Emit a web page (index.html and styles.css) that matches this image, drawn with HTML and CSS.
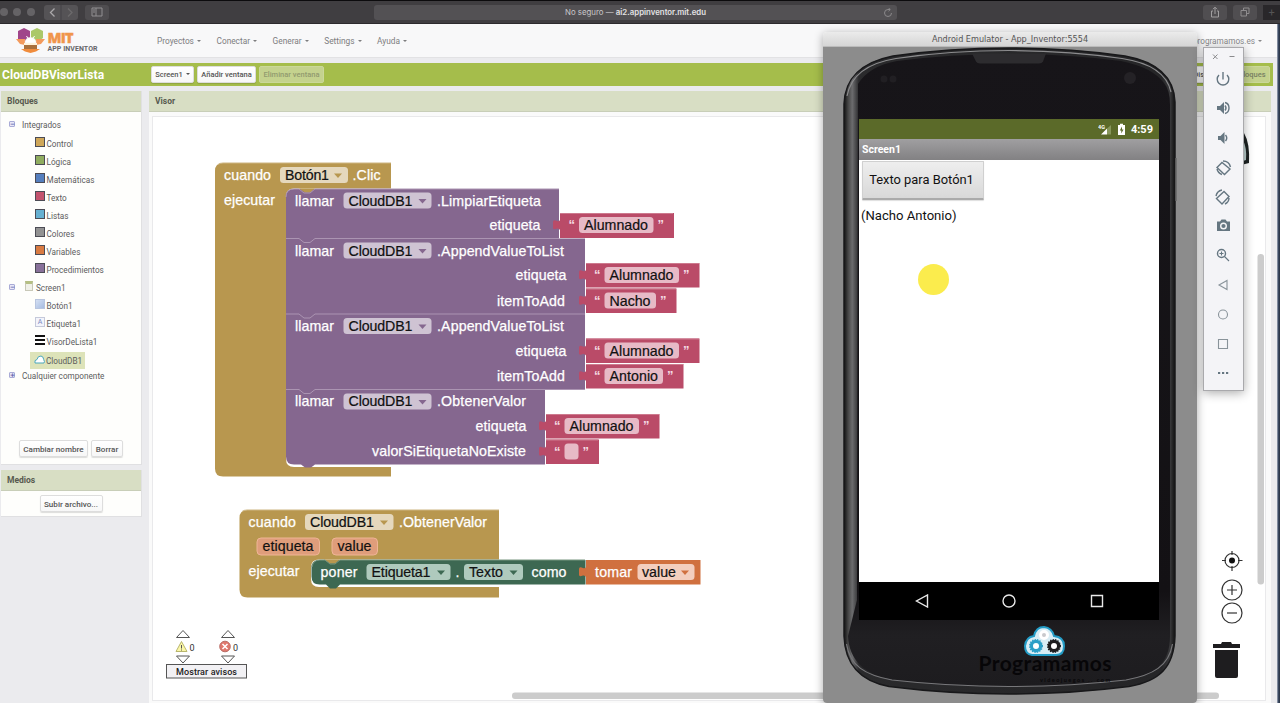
FILE: index.html
```html
<!DOCTYPE html>
<html lang="es">
<head>
<meta charset="utf-8">
<title>MIT App Inventor</title>
<link rel="stylesheet" href="styles.css">
</head>
<body>
<div class="browser">
  <div class="lights"><i></i><i></i><i></i></div>
  <div class="navbtns">
    <svg width="34" height="15" viewBox="0 0 34 15"><path d="M10.500 3.500 6.500 7.500l4 4" fill="none" stroke="#aaa8aa" stroke-width="1.300"/><path d="M24 3.500l4 4-4 4" fill="none" stroke="#6c6a6c" stroke-width="1.300"/><path d="M17 0v15" stroke="#454346"/></svg>
  </div>
  <div class="sidebtn"><svg width="12" height="10" viewBox="0 0 12 10"><path d="M1 1h10v8H1zM5 1v8M2 3h2M2 5h2" fill="none" stroke="#929092"/></svg></div>
  <div class="address"><span>No seguro — <b>ai2.appinventor.mit.edu</b></span>
    <svg class="reload" width="10" height="10" viewBox="0 0 10 10"><path d="M8.500 5A3.500 3.500 0 1 1 5 1.500h2M5.500 0 7.300 1.500 5.500 3.200" fill="none" stroke="#8b898b"/></svg></div>
  <div class="winbtns">
    <span><svg width="10" height="12" viewBox="0 0 10 12"><path d="M3 5H1.500v6h7V5H7M5 8V1.500M3 3.200l2-2 2 2" fill="none" stroke="#a09ea0"/></svg></span>
    <span><svg width="10" height="10" viewBox="0 0 10 10"><path d="M1 3.500h5.500V9H1zM3.500 3.500V1H9v5.500H6.500" fill="none" stroke="#8f8d8f"/></svg></span>
    <span class="plus">+</span>
  </div>
</div>

<header class="top">
  <svg class="logo" width="86" height="30" viewBox="14 25 86 30">
    <path d="M18 30l6-3 6 3v7l-6 4-6-3z" fill="#a0458a"/>
    <path d="M31 30l6-3 6 3v7l-6 4-6-3z" fill="#abc868"/>
    <path d="M16 38h9v6l-5-1zM45 38h-9v6l5-1z" fill="#f39a5c"/>
    <path d="M21 48h19l-4 2.500-5.500 1.500-5.500-1.500z" fill="#f08c3c"/>
    <path d="M25 42q0-5.500 5.500-5.500t5.500 5.500z" fill="#fff" stroke="#eee" stroke-width=".5"/>
    <path d="M26.500 35l1.500 2.500M34.500 35 33 37.500" stroke="#fff"/>
    <path d="M24 42h13v6H24z" fill="#a9703c"/><path d="M24 42h13v2H24z" fill="#fff3dc"/>
    <text x="47.500" y="41.500" class="mit" textLength="26">MIT</text>
    <text x="47.500" y="50" class="appinv" textLength="50">APP INVENTOR</text>
  </svg>
  <nav class="menu"><a>Proyectos</a><a>Conectar</a><a>Generar</a><a>Settings</a><a>Ayuda</a></nav>
  <a class="account">programamos.es</a>
</header>

<div class="project">
  <h1>CloudDBVisorLista</h1>
  <button class="caret">Screen1</button><button>Añadir ventana</button><button class="off">Eliminar ventana</button>
  <div class="modes"><button>Diseñador</button><button class="off">Bloques</button></div>
</div>

<main class="cols">
  <aside class="side">
    <section class="panel bloques">
      <h2>Bloques</h2>
      <div class="tree">
        <div class="node root"><i class="tog">−</i>Integrados</div>
        <div class="node"><i class="sq control"></i>Control</div>
        <div class="node"><i class="sq logica"></i>Lógica</div>
        <div class="node"><i class="sq mates"></i>Matemáticas</div>
        <div class="node"><i class="sq texto"></i>Texto</div>
        <div class="node"><i class="sq listas"></i>Listas</div>
        <div class="node"><i class="sq colores"></i>Colores</div>
        <div class="node"><i class="sq vars"></i>Variables</div>
        <div class="node"><i class="sq procs"></i>Procedimientos</div>
        <div class="node scr"><i class="tog">−</i><i class="sheet"></i>Screen1</div>
        <div class="node"><i class="sq btn"></i>Botón1</div>
        <div class="node"><i class="sq lbl">A</i>Etiqueta1</div>
        <div class="node"><i class="sq lst"></i>VisorDeLista1</div>
        <div class="node sel"><span><svg width="11" height="9" viewBox="0 0 11 9"><path d="M1 8Q0 5 3 4.500 3.500 1 7 1q2.500.5 2.700 3.500Q11 7 10 8z" fill="#fff" stroke="#4ba7bd"/></svg>CloudDB1</span></div>
        <div class="node root last"><i class="tog">+</i>Cualquier componente</div>
      </div>
      <div class="actions"><button>Cambiar nombre</button><button>Borrar</button></div>
    </section>
    <section class="panel medios">
      <h2>Medios</h2>
      <div class="actions"><button>Subir archivo...</button></div>
    </section>
  </aside>

  <section class="panel visor">
    <h2>Visor</h2>
    <svg class="workspace" width="1122" height="591" viewBox="149 112 1122 591">
      <defs>
        <path id="dn" d="M0 0h8L4 4.500z"/>
        <path id="tab" d="M1 7H0Q-1 9-3 8-7 6-7 9V15Q-7 17-3 15.500-1 15 0 17H1z"/>
      </defs>
      <rect x="152.500" y="116.500" width="1113" height="584" fill="#fff" stroke="#e9e9eb"/>

      <!-- cuando Botón1.Clic -->
      <path d="M391 163H223q-8 0-8 8V468.500q0 8 8 8H391z" class="gold"/>
      <path d="M392 188.500H294q-8 0-8 8V459q0 8 8 8h98z" fill="#fff"/>
      <path d="M218 164.500q2-1.500 5-1.500H391" class="hi"/>
      <path d="M286 197q0-8 8-8H559V238.500H585V389.500H545V464.500H315l-4 3h-6l-4-3H294q-8 0-8-8z" class="purple"/>
      <path d="M299 188.500h16l-5 4h-5z" class="gold"/>
      <path d="M286 238.500h13l5 4h6l5-4H559M286 314h13l5 4h6l5-4H585M286 389.500h13l5 4h6l5-4H585M286 197q0-8 8-8h5l5 4h6l5-4H559" class="seam"/>
      <g class="t">
        <text x="224" y="180" textLength="47">cuando</text><text x="352.500" y="180" textLength="28">.Clic</text>
        <text x="224" y="204.500" textLength="51">ejecutar</text>
      </g>
      <rect x="280" y="167" width="68" height="16" rx="3.500" class="pg"/><text x="285" y="180" class="k" textLength="44">Botón1</text><use href="#dn" x="334" y="173.500" fill="#b8974f"/>
      <g class="t">
        <text x="295" y="205.500" textLength="39">llamar</text><text x="437" y="205.500" textLength="104">.LimpiarEtiqueta</text><text x="489.500" y="230" textLength="51">etiqueta</text>
        <text x="295" y="255.500" textLength="39">llamar</text><text x="437" y="255.500" textLength="127">.AppendValueToList</text><text x="515.500" y="280" textLength="51">etiqueta</text><text x="497" y="305.500" textLength="68">itemToAdd</text>
        <text x="295" y="331" textLength="39">llamar</text><text x="437" y="331" textLength="127">.AppendValueToList</text><text x="515.500" y="355.500" textLength="51">etiqueta</text><text x="497" y="381" textLength="68">itemToAdd</text>
        <text x="295" y="406" textLength="39">llamar</text><text x="437" y="406" textLength="89">.ObtenerValor</text><text x="475.500" y="431" textLength="51">etiqueta</text><text x="372" y="456" textLength="154">valorSiEtiquetaNoExiste</text>
      </g>
      <g class="pp"><rect x="343.500" y="192.500" width="88" height="16" rx="3.500"/><rect x="343.500" y="242.500" width="88" height="16" rx="3.500"/><rect x="343.500" y="318" width="88" height="16" rx="3.500"/><rect x="343.500" y="393.500" width="88" height="16" rx="3.500"/></g>
      <g class="k"><text x="348.500" y="205.500" textLength="64">CloudDB1</text><text x="348.500" y="255.500" textLength="64">CloudDB1</text><text x="348.500" y="331" textLength="64">CloudDB1</text><text x="348.500" y="406" textLength="64">CloudDB1</text></g>
      <g fill="#85678f"><use href="#dn" x="418.500" y="199"/><use href="#dn" x="418.500" y="249"/><use href="#dn" x="418.500" y="324.500"/><use href="#dn" x="418.500" y="400"/></g>

      <g class="red">
        <rect x="560" y="213" width="114" height="25"/><use href="#tab" x="560" y="213"/>
        <rect x="586" y="263" width="113.500" height="24.500"/><use href="#tab" x="586" y="263"/>
        <rect x="586" y="288.500" width="90.500" height="24.500"/><use href="#tab" x="586" y="288.500"/>
        <rect x="586" y="338.500" width="113.500" height="24.500"/><use href="#tab" x="586" y="338.500"/>
        <rect x="586" y="364" width="97.500" height="24.500"/><use href="#tab" x="586" y="364"/>
        <rect x="546" y="414" width="113.500" height="24.500"/><use href="#tab" x="546" y="414"/>
        <rect x="546" y="439.500" width="53" height="24.500"/><use href="#tab" x="546" y="439.500"/>
      </g>
      <path d="M560 213.500h113M586 263.500h113M586 289h90M586 339h113M586 364.500h97M546 414.500h113M546 440h52" class="redhi"/>
      <g class="pr"><rect x="579" y="217" width="74.500" height="16" rx="3.500"/><rect x="604.500" y="267" width="74.500" height="16" rx="3.500"/><rect x="604.500" y="292.500" width="51.500" height="16" rx="3.500"/><rect x="604.500" y="342.500" width="74.500" height="16" rx="3.500"/><rect x="604.500" y="368" width="58.500" height="16" rx="3.500"/><rect x="564.500" y="418" width="74.500" height="16" rx="3.500"/><rect x="564.500" y="443.500" width="14" height="16" rx="3.500"/></g>
      <g class="k"><text x="584" y="230" textLength="64">Alumnado</text><text x="609.500" y="280" textLength="64">Alumnado</text><text x="609.500" y="305.500" textLength="41">Nacho</text><text x="609.500" y="355.500" textLength="64">Alumnado</text><text x="609.500" y="381" textLength="48.500">Antonio</text><text x="569.500" y="431" textLength="64">Alumnado</text></g>
      <g class="q"><text x="568.500" y="229">“</text><text x="657.500" y="229">”</text><text x="594" y="279">“</text><text x="683" y="279">”</text><text x="594" y="304.500">“</text><text x="660" y="304.500">”</text><text x="594" y="354.500">“</text><text x="683" y="354.500">”</text><text x="594" y="380">“</text><text x="667" y="380">”</text><text x="554" y="430">“</text><text x="643" y="430">”</text><text x="554" y="455.500">“</text><text x="582.500" y="455.500">”</text></g>

      <!-- cuando CloudDB1.ObtenerValor -->
      <path d="M499 510H247.500q-8 0-8 8V589.500q0 8 8 8H499z" class="gold"/>
      <path d="M499.500 559.500H319q-8 0-8 8V579q0 8 8 8H499.500z" fill="#fff"/>
      <path d="M242 511.500q2-1.500 5-1.500H499" class="hi"/>
      <path d="M311.500 568q0-8 8-8H585.500V584.500H340l-4 4h-6l-4-4H319.500q-8 0-8-8z" class="green"/>
      <path d="M324 559.500h16l-5 4h-5z" class="gold"/>
      <path d="M312 567q1-7 8-7h5l5 4h5l5-4H585" fill="none" stroke="#76957f"/>
      <g class="orange"><rect x="586" y="560" width="114.500" height="24.500"/><use href="#tab" x="586" y="560"/></g>
      <g class="t"><text x="248.500" y="527" textLength="47.500">cuando</text><text x="399" y="527" textLength="88">.ObtenerValor</text><text x="248.500" y="576" textLength="51">ejecutar</text><text x="320.500" y="577" textLength="37">poner</text><text x="455.500" y="577">.</text><text x="531.500" y="577" textLength="35">como</text><text x="595" y="577" textLength="37">tomar</text></g>
      <rect x="305" y="514" width="88.500" height="16" rx="3.500" class="pg"/><use href="#dn" x="380" y="520.500" fill="#b8974f"/>
      <g fill="#df9d7b" stroke="#efb596"><rect x="257" y="538" width="62.500" height="17" rx="4"/><rect x="332" y="538" width="45.500" height="17" rx="4"/></g>
      <g fill="#afcabd"><rect x="366.500" y="564" width="84" height="16" rx="3.500"/><rect x="464" y="564" width="59" height="16" rx="3.500"/></g>
      <rect x="637.500" y="564" width="57" height="16" rx="3.500" fill="#f3cebe"/>
      <use href="#dn" x="437" y="570.500" fill="#3d6852"/><use href="#dn" x="509.500" y="570.500" fill="#3d6852"/><use href="#dn" x="681" y="570.500" fill="#d0703f"/>
      <g class="k"><text x="310" y="527" textLength="64">CloudDB1</text><text x="262.500" y="551" textLength="51">etiqueta</text><text x="337.500" y="551" textLength="34">value</text><text x="371.500" y="577" textLength="59">Etiqueta1</text><text x="469" y="577" textLength="34">Texto</text><text x="642" y="577" textLength="34">value</text></g>

      <!-- warning indicator -->
      <g fill="#fff" stroke="#555"><path d="M176.500 637.500h13l-6.500-7zM221.500 637.500h13l-6.500-7zM176.500 656h13l-6.500 7zM221.500 656h13l-6.500 7z"/></g>
      <path d="M176 651.500l5.500-10 5.500 10z" fill="#fbf7a8" stroke="#b9b66d"/><path d="M181.500 645v3.500M181.500 649.500v1" stroke="#555"/>
      <circle cx="225" cy="646.500" r="5.300" fill="#e0786d" stroke="#b96d65"/><path d="M222.500 644l5 5m0-5-5 5" stroke="#fff" stroke-width="1.500"/>
      <g class="cnt"><text x="189.500" y="650.500">0</text><text x="233" y="650.500">0</text></g>
      <rect x="166.500" y="664.500" width="80" height="13.500" fill="#f2f1f4" stroke="#555"/>
      <text x="176" y="674.500" class="avisos" textLength="61">Mostrar avisos</text>

      <!-- backpack edge -->
      <path d="M1230 133h14q6 10 5 30l-8 2z" fill="#1d2222"/><path d="M1243 140q4 8 3 20l-3 1z" fill="#b9cdcc"/>

      <!-- zoom controls, trash, scrollbars -->
      <g fill="none" stroke="#333" stroke-width="1.200"><circle cx="1232" cy="560.500" r="7"/><path d="M1232 551v4M1232 566v5M1222 560.500h4M1238 560.500h4.500"/><circle cx="1232" cy="590" r="10"/><path d="M1227 590h10M1232 585v10"/><circle cx="1232" cy="613" r="10"/><path d="M1227 613h10"/></g>
      <circle cx="1232" cy="560.500" r="3" fill="#111"/>
      <path d="M1213 644h8l1-2h9l1 2h8v4h-27zM1215 650h23v26q0 2-2 2h-19q-2 0-2-2z" fill="#1e1d1f"/>
      <rect x="1257.500" y="254" width="6.500" height="330.500" rx="3" fill="#ccc"/>
      <rect x="512" y="692.500" width="707" height="6.500" rx="3" fill="#ccc"/>
    </svg>
  </section>
</main>
<div class="edge"></div>

<div class="emulator">
  <div class="emu-title">Android Emulator - App_Inventor:5554</div>
  <div class="emu-body">
    <svg class="phone" width="374" height="656" viewBox="823 47 374 656">
      <defs>
        <linearGradient id="rim" x1="0" x2="1"><stop offset="0" stop-color="#111"/><stop offset=".012" stop-color="#444"/><stop offset=".025" stop-color="#6c6c6e"/><stop offset=".045" stop-color="#2a2a2c"/><stop offset=".96" stop-color="#252527"/><stop offset=".985" stop-color="#39393b"/><stop offset="1" stop-color="#111"/></linearGradient>
        <linearGradient id="face" x1="0" y1="0" x2="0" y2="1"><stop offset="0" stop-color="#171519"/><stop offset=".85" stop-color="#131114"/><stop offset=".92" stop-color="#201f22"/><stop offset="1" stop-color="#1d1c1f"/></linearGradient>
      </defs>
      <path d="M844 104C845 76 863 62 893 56Q950 48 1009 48T1125 56C1158 62 1174 77 1175 102V636C1174 668 1159 681 1129 686.500Q1070 694 1009 694T889 686.500C860 681 845 665 844 636z" fill="url(#rim)" stroke="#18181a" stroke-width="1.500"/>
      <path d="M858 84Q869 66 897 61 950 54 1009 54T1121 61Q1152 67 1164 83 1170 90 1170 105V636C1170 664 1154 675 1127 679.500Q1070 686 1009 686T891 679.500C865 675 849 660 848 636L857 600z" fill="url(#face)"/>
      <path d="M847 96C851 75 868 63 896 58.500Q950 50.500 1009 50.500T1122 58.500C1152 63 1167 74 1171 92" fill="none" stroke="#8c8c8e" stroke-width="1.200"/>
      <path d="M846.500 644C850 666 865 675 892 680Q950 686.500 1009 686.500T1126 680C1153 675 1169 666 1172.500 644" fill="none" stroke="#77777a" stroke-width="1.200"/>
      <path d="M972 53.500h74l-3 8q-1 2-4 2h-59q-3 0-4-2z" fill="#2d2c2f"/>
      <circle cx="884" cy="79" r="3.500" fill="#211f23"/><circle cx="893" cy="79" r="3.500" fill="#211f23"/><circle cx="1130" cy="78" r="6" fill="#242226"/>
      <path d="M1176 158v43" stroke="#666" stroke-width="1.500"/>
      <path d="M1032 655q-7-1-7-9 1-9 9-10 2-9 10-9 8 1 10 9 10 1 10 10t-8 9z" fill="#d8edf5" stroke="#239cc6" stroke-width="2"/>
      <circle cx="1044" cy="635" r="3.500" fill="#c9c9cc" stroke="#fff" stroke-width="3"/>
      <circle cx="1036" cy="646" r="4.600" fill="#fff" stroke="#2b9fc7" stroke-width="3.200"/><circle cx="1036" cy="646" r="6.300" fill="none" stroke="#2b9fc7" stroke-width="1.400" stroke-dasharray="1.300 1.200"/>
      <circle cx="1054" cy="646" r="4.600" fill="#fff" stroke="#1c1b1d" stroke-width="3.200"/><circle cx="1054" cy="646" r="6.300" fill="none" stroke="#1c1b1d" stroke-width="1.400" stroke-dasharray="1.300 1.200"/>
      <text x="978.500" y="671" class="brand" textLength="133">Programamos</text>
      <text x="1040" y="682" class="brand2" textLength="70">videojuegos .. com</text>
    </svg>
    <div class="screen">
      <div class="status">
        <svg width="28" height="13" viewBox="0 0 28 13"><text x="0" y="5.500" class="g4">4G</text><path d="M3 11.500 9 5.500v6z" fill="#fff"/><path d="M9 5.500 13 2v9.500H9z" fill="#87965b"/><path d="M20 2h2V.7h3V2h2v10h-7z" fill="#fff"/><path d="M24 3.500 21.800 7.500h1.500V10.500l2.200-4H24z" fill="#5b6a29"/></svg>
        <b>4:59</b>
      </div>
      <div class="apptitle">Screen1</div>
      <div class="app"><button>Texto para Botón1</button><p>(Nacho Antonio)</p><i class="pointer"></i></div>
      <div class="softkeys">
        <svg width="14" height="14" viewBox="0 0 14 14"><path d="M12.500 1v12L1.500 7z"/></svg>
        <svg width="14" height="14" viewBox="0 0 14 14"><circle cx="7" cy="7" r="6"/></svg>
        <svg width="14" height="14" viewBox="0 0 14 14"><path d="M1.500 1.500h11v11h-11z"/></svg>
      </div>
    </div>
  </div>
</div>

<div class="tools">
  <svg width="40" height="343" viewBox="1203 47 40 343" fill="none" stroke="#657681" stroke-width="1.400">
    <path d="M1213 54.500l4.500 4.500m0-4.500-4.500 4.500M1229.500 56.500h5" stroke="#8a8a8d" stroke-width="1"/>
    <path d="M1219 75a5.800 5.800 0 1 0 8 0M1223 72v7.500"/>
    <path d="M1217 106v4h3l4 4v-12l-4 4z" fill="#657681" stroke="none"/><path d="M1225 105.500q2 2.500 0 5M1225 102.500q4 1 4 5.500t-4 5.500"/>
    <path d="M1218 136v4h2.500l4 4v-12l-4 4z" fill="#657681" stroke="none"/><path d="M1225.500 135q2.500 3 0 6"/>
    <path d="M1217 167.500l5-5 8 6.500-5.500 5.500zM1223 161q6 0 7.500 6M1217 169q1 4 5 5.500"/>
    <path d="M1229 196.500l-5-5-7.500 7 5.500 5.500zM1222 190q-5 1-6 6M1229 198q0 4-4 6"/>
    <path d="M1217 221.500h3l1.500-2h4l1.500 2h3V231h-13z" fill="#657681" stroke="none"/><circle cx="1223.500" cy="226" r="2.800" stroke="#f4f4f7"/>
    <circle cx="1221.500" cy="253.500" r="4"/><path d="M1224.500 256.500l4.500 4.500M1219.500 253.500h4M1221.500 251.500v4" stroke-width="1.100"/>
    <path d="M1227 280.500v9l-8-4.500zM1218.500 339.500h9v9h-9z" stroke="#89939a" stroke-width="1.100"/><circle cx="1223" cy="314.500" r="4.500" stroke="#89939a" stroke-width="1.100"/>
    <path d="M1218 373h2.200M1222 373h2.200M1226 373h2.200" stroke-width="2.200"/>
  </svg>
</div>
</body>
</html>
```

FILE: styles.css
```css
* { box-sizing: border-box; }
body { margin: 0; width: 1280px; height: 703px; overflow: hidden; position: relative; background: #ebebee; font-family: Roboto, "Liberation Sans", sans-serif; font-size: 8.2px; color: #666; }
h1, h2, p { margin: 0; }
i { font-style: normal; }
button { font: 500 8.1px Roboto, sans-serif; color: #555; border: 1px solid #ddd; border-radius: 2px; background: linear-gradient(#fff, #f7f7f7); padding: 0; height: 17px; white-space: nowrap; box-shadow: 0 1px 1px #0002; }

.browser { height: 24px; display: flex; align-items: center; background: #403e41; border-top: 1px solid #0c0b0d; border-bottom: 1px solid #2c2a2d; }
.lights { display: flex; gap: 5.300px; width: 44px; }
.lights i { width: 8px; height: 8px; border-radius: 50%; background: #656366; }
.navbtns { width: 34px; height: 15px; border-radius: 3px; background: #555356; }
.sidebtn { width: 24px; height: 15px; margin-left: 7px; display: flex; justify-content: center; align-items: center; border-radius: 3px; background: #4f4d50; }
.address { width: 523px; height: 15px; margin-left: 265px; display: flex; align-items: center; border-radius: 3px; background: #535154; color: #c9c7c9; font: 7.850px Inter, sans-serif; position: relative; justify-content: center; }
.address b { color: #e4e2e4; font-weight: 600; }
.reload { position: absolute; right: 4px; top: 3px; }
.winbtns { margin-left: auto; display: flex; gap: 6px; }
.winbtns span { width: 24px; height: 15px; display: flex; align-items: center; justify-content: center; border-radius: 3px; background: #504e51; }
.winbtns .plus { width: 17px; background: #29272a; color: #555; border-radius: 0; font-size: 11px; }

.top { height: 34px; display: flex; align-items: center; background: #f8f8f9; border-bottom: 1px solid #e2e2e4; }
.logo { margin-left: 14px; }
.mit { font: 800 14.500px "Open Sans", sans-serif; fill: #f0954b; stroke: #f0954b; stroke-width: .4px; }
.appinv { font: bold 7px Roboto, sans-serif; fill: #67676a; }
.menu { display: flex; gap: 15.600px; margin-left: 57px; color: #7d7d7f; font-size: 8.3px; }
.menu a, .account, .caret { white-space: nowrap; }
.menu a::after, .account::after, .caret::after { content: ""; display: inline-block; border: 2px solid transparent; border-top-color: currentColor; border-bottom: 0; margin-left: 3px; vertical-align: 2px; }
.account { margin-left: auto; margin-right: 18px; color: #88888a; }

.project { height: 23px; margin-top: 5px; width: 1273px; display: flex; align-items: center; background: #a5bd4b; }
.project h1 { width: 151px; padding: 2px 0 0 2px; color: #fff; font-size: 12px; line-height: 23px; letter-spacing: .05px; }
.project > button { margin-right: 3px; }
.project button { font-size: 7.5px; }
.project > button:nth-of-type(1) { width: 43px; }
.project > button:nth-of-type(2) { width: 59px; }
.project > button:nth-of-type(3) { width: 65px; }
.project button.off { background: #c4d28e; border-color: #cbd89a; color: #929b6e; box-shadow: none; }
.modes { margin-left: auto; margin-right: 3px; display: flex; gap: 3px; }
.modes button { width: 41px; }
.modes button.off { width: 36px; color: #788063; }

.cols { display: flex; gap: 7px; margin-top: 5px; height: 612px; }
.side { width: 142px; padding-left: 1px; }
.panel h2 { height: 21px; padding-left: 6px; line-height: 21px; font-size: 8.5px; color: #57594f; background: #d8dec4; border-bottom: 1px solid #c8ceb8; }
.bloques, .medios { background: #fefefc; border: 1px solid #e0e0e2; border-top: 0; border-left: 0; }
.bloques { height: 374px; display: flex; flex-direction: column; }
.medios { margin-top: 5px; height: 47px; }
.visor { width: 1122px; }
.workspace { display: block; background: #fafafa; }

.tree { padding-top: 3.500px; flex: 1; }
.node { height: 18.050px; padding-left: 34px; display: flex; align-items: center; padding-top: 2px; color: #5c5c5c; }
.node.root, .node.scr { padding-left: 8px; }
.node.root { padding-top: 0; }
.tog { width: 6px; height: 6px; border: 1px solid #a9abd6; border-radius: 1px; background: #e8e8f8; color: #5659a6; font: bold 6px/4px "DejaVu Sans", sans-serif; text-align: center; margin: 0 7px 2px 0; }
.sq { width: 10px; height: 10px; margin: 0 1.500px 4px 0; border: 1px solid #4c4c55; flex: none; }
.control { background: #cfa759; } .logica { background: #90ad60; } .mates { background: #557fbe; }
.texto { background: #c3536e; } .listas { background: #66b0d1; } .colores { background: #929292; }
.vars { background: #d97b42; } .procs { background: #88719a; }
.sheet { width: 8px; height: 10px; margin: 0 3px 4px 3px; border: 1px solid #c8c8b8; border-top: 3px solid #b5bf84; background: #f0f0e8; }
.btn { background: linear-gradient(135deg, #d5e0f3, #a6bce1); border-color: #b8c5df; }
.lbl { background: #f3f4fb; border-color: #c5c9da; color: #7d8bc1; font-size: 7px; line-height: 8px; text-align: center; }
.lst { border: 0; background: linear-gradient(#111 0 2px, #fff 2px 3.500px, #111 3.500px 6px, #fff 6px 7.500px, #111 7.500px); }
.sel { padding-left: 29px; }
.sel span { display: flex; align-items: center; width: 55px; height: 17px; padding: 2px 0 0 4px; background: #dde3b9; }
.sel svg { margin: 0 1px 4px 0; flex: none; }
.node.last { height: 15px; }
.actions { display: flex; justify-content: center; gap: 3px; }
.bloques .actions { padding-bottom: 7px; }
.bloques .actions button:first-child { width: 69px; }
.bloques .actions button:last-child { width: 32px; }
.medios .actions { padding-top: 4px; }
.medios button { width: 63px; }

.gold { fill: #b8974f; } .purple { fill: #85678f; } .red { fill: #ba4b68; } .green { fill: #3d6852; } .orange { fill: #d0703f; }
.hi { fill: none; stroke: #cdb581; }
.seam { fill: none; stroke: #ab94b2; }
.redhi { fill: none; stroke: #cd7a8e; }
.pg { fill: #e5d8bd; } .pp { fill: #cfc3d3; } .pr { fill: #e7bac6; }
.t, .k, .q { font: 14.200px "Liberation Sans", sans-serif; }
.t { fill: #fff; stroke: #fff; stroke-width: .25px; } .k { fill: #111; stroke: #111; stroke-width: .2px; }
.q { fill: #f5dce3; font-weight: bold; font-size: 13px; }
.cnt { font: 9px Roboto, sans-serif; fill: #333; }
.avisos { font: 500 9px Roboto, sans-serif; fill: #222; }

.edge { position: absolute; right: 0; top: 24px; width: 3px; height: 679px; background: linear-gradient(90deg, #a9b0be, #3c4b64 45%, #26303f); }

.emulator { position: absolute; left: 823px; top: 32px; width: 374px; height: 671px; border-radius: 4px; overflow: hidden; }
.emulator, .tools { box-shadow: 0 2px 10px #0005; }
.emu-title { height: 15px; background: linear-gradient(#ebebeb, #d5d5d5); text-align: center; font: 8.150px/15px "DejaVu Sans", sans-serif; color: #555; border-bottom: 1px solid #bbb; }
.emu-body { position: relative; height: 656px; background: #8c8c8c; }
.phone { display: block; }
.brand { font: bold 21px Lato, sans-serif; fill: #070608; } .brand2 { font: bold 5.500px Lato, sans-serif; fill: #09080a; }
.screen { position: absolute; left: 36px; top: 72px; width: 300px; height: 501px; display: flex; flex-direction: column; background: #fff; }
.status { height: 20px; background: #5b6a29; display: flex; justify-content: flex-end; align-items: center; gap: 5px; padding-right: 6px; color: #fff; font-size: 11px; }
.g4 { font: bold 5.500px Roboto, sans-serif; fill: #fff; }
.apptitle { height: 20.500px; padding-left: 3px; line-height: 21px; background: linear-gradient(#a09fa1, #828183); color: #fff; font-weight: bold; font-size: 10.500px; }
.app { flex: 1; position: relative; padding: 1px 2px; color: #111; font-size: 13.100px; }
.app button { display: block; width: 122px; height: 39.500px; margin-left: 1px; padding-right: 3px; font: 12.900px Roboto, sans-serif; color: #111; border-radius: 1px; background: linear-gradient(#eee, #d8d8d8); border: 1px solid #d0d0d0; border-bottom: 2px solid #aaa; }
.app p { padding-top: 8px; line-height: 16px; }
.pointer { position: absolute; left: 59px; top: 104px; width: 31px; height: 31px; border-radius: 50%; background: #fbec4d; }
.softkeys { height: 38px; background: #000; display: flex; justify-content: center; align-items: center; gap: 73.500px; }
.softkeys svg { fill: none; stroke: #e8e8e8; stroke-width: 1.400; }

.tools { position: absolute; left: 1203px; top: 47px; width: 41px; height: 344px; background: #f4f4f7; border: 1px solid #a9a9ac; }
.tools svg { display: block; margin: -1px; }
```
